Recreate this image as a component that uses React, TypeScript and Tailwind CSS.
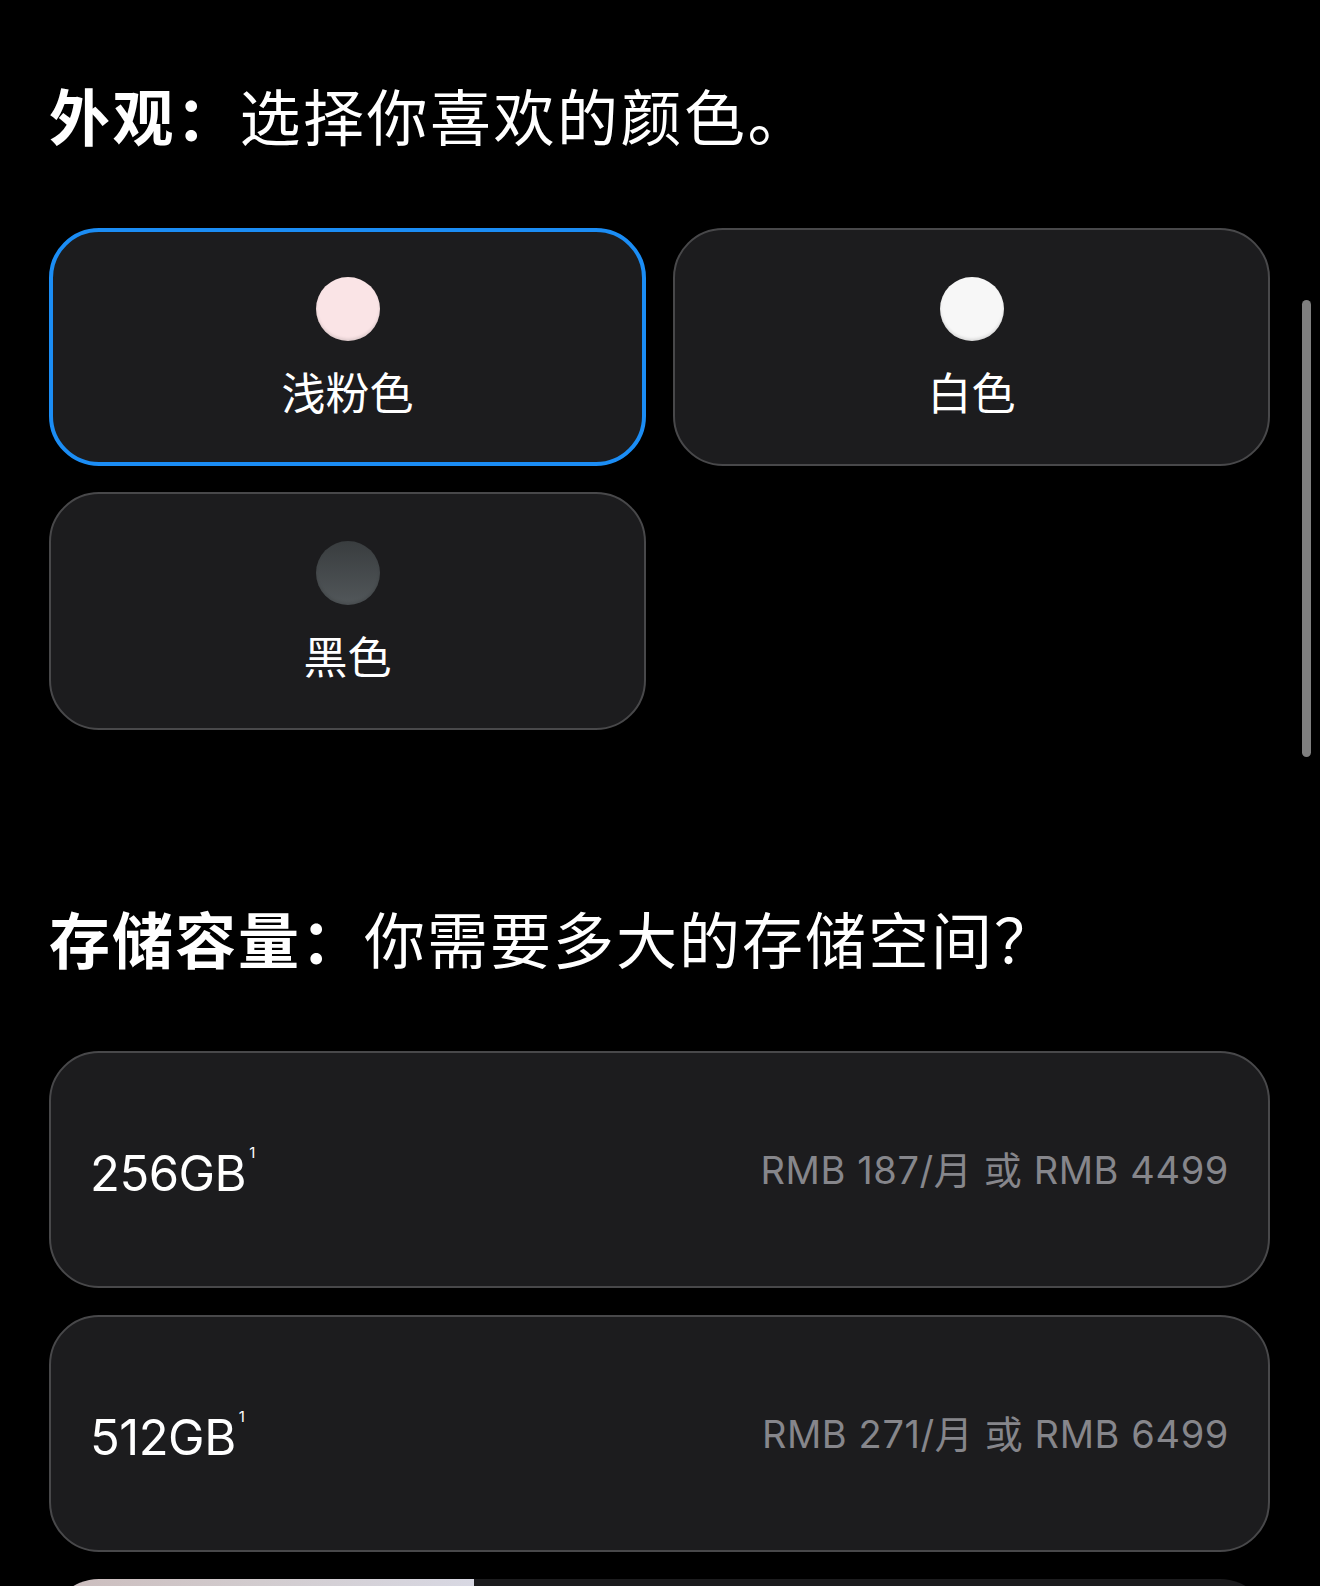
const colors = [
  { name: "浅粉色", swatch: "bg-[#fae4e6]", selected: true },
  { name: "白色", swatch: "bg-[#f7f7f7]", selected: false },
  { name: "黑色", swatch: "bg-gradient-to-b from-[#393d3f] to-[#52575a]", selected: false },
];

const storage = [
  { size: "256GB", price: "RMB 187/月 或 RMB 4499" },
  { size: "512GB", price: "RMB 271/月 或 RMB 6499" },
];

const App = () => {
  return (
    <div className="relative h-[1586px] overflow-hidden bg-black text-white font-['Inter','Noto_Sans_CJK_SC',sans-serif]">
      {/* overlay scroll indicator */}
      <div className="absolute left-[1302px] top-[300px] h-[457px] w-[9px] rounded-full bg-[#7f7f7f]" />

      <div className="pl-[49px] pr-[50px] pt-[84px]">
        <h2 className="text-[61px] leading-none tracking-[2.5px] font-['Noto_Sans_CJK_SC',sans-serif]">
          <span className="font-bold">外观：</span>
          <span className="font-normal">选择你喜欢的颜色。</span>
        </h2>

        <div className="mt-[83px] grid grid-cols-2 gap-x-[27px] gap-y-[26px]">
          {colors.map((c) => (
            <div
              key={c.name}
              className={
                c.selected
                  ? "flex h-[238px] flex-col items-center justify-center gap-[28px] pb-[4px] rounded-[50px] border-[4px] border-[#1b8df5] bg-[#1c1c1e]"
                  : "flex h-[238px] flex-col items-center justify-center gap-[28px] pb-[4px] rounded-[50px] border-2 border-[#48484a] bg-[#1c1c1e]"
              }
            >
              <div className={`h-[64px] w-[64px] rounded-full ${c.swatch} shadow-[inset_0_-2px_3px_rgba(0,0,0,0.12)]`} />
              <div className="text-[44px] leading-none font-['Noto_Sans_CJK_SC',sans-serif]">{c.name}</div>
            </div>
          ))}
        </div>

        <h2 className="mt-[177px] text-[61px] leading-none tracking-[2px] font-['Noto_Sans_CJK_SC',sans-serif]">
          <span className="font-bold">存储容量：</span>
          <span className="font-normal">你需要多大的存储空间？</span>
        </h2>

        <div className="mt-[83px] flex flex-col gap-[27px]">
          {storage.map((s) => (
            <div
              key={s.size}
              className="flex h-[237px] items-center justify-between rounded-[50px] border-2 border-[#48484a] bg-[#1c1c1e] pl-[39px] pr-[39px]"
            >
              <div className="flex items-start pt-[8px]">
                <span className="text-[49px] leading-none tracking-[-0.5px]">{s.size}</span>
                <span className="ml-[3px] -mt-[4px] text-[15px] leading-none">1</span>
              </div>
              <div className="text-[38px] leading-none tracking-[0.6px] text-[#86868b]">{s.price}</div>
            </div>
          ))}
          <div className="flex h-[237px] overflow-hidden rounded-[50px] bg-[#1c1c1e]">
            <div className="h-full w-[425px] bg-gradient-to-r from-[#cbbcbc] via-[#d2cccf] to-[#d8d8e3]" />
          </div>
        </div>
      </div>
    </div>
  );
};

export default App;
